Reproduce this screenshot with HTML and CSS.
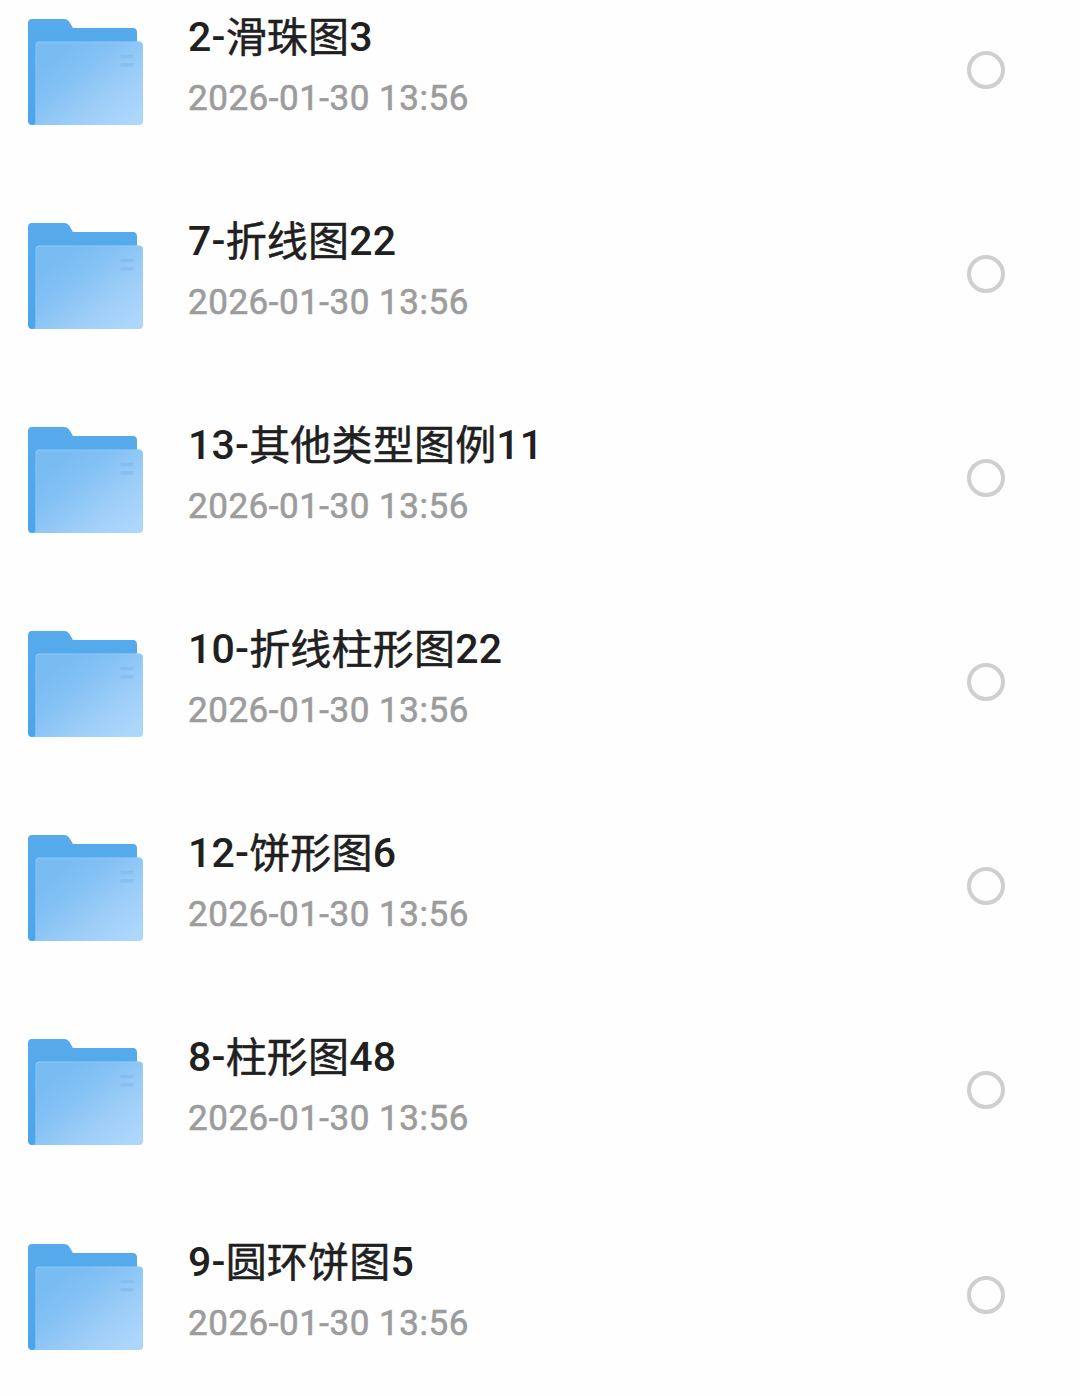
FILE: index.html
```html
<!DOCTYPE html>
<html lang="zh-CN">
<head>
<meta charset="utf-8">
<title>文件列表</title>
<link rel="stylesheet" href="styles.css">
</head>
<body>
<svg class="defs" width="0" height="0" aria-hidden="true">
  <defs>
    <linearGradient id="back" x1="0" y1="0" x2="0" y2="1">
      <stop offset="0" stop-color="#57abec"/>
      <stop offset="1" stop-color="#4ba5ec"/>
    </linearGradient>
    <linearGradient id="front" gradientUnits="userSpaceOnUse" x1="26" y1="35" x2="88" y2="112">
      <stop offset="0" stop-color="#78bcf2"/>
      <stop offset="0.3" stop-color="#84c1f4"/>
      <stop offset="0.65" stop-color="#9bcdf8"/>
      <stop offset="1" stop-color="#add6fb"/>
    </linearGradient>
    <symbol id="folder" viewBox="0 0 116 107">
      <path fill="url(#back)" d="M0 4Q0 0 4 0H36Q39.500 0 41.500 3L45 9H105Q109 9 109 13.500V106H4Q0 106 0 102Z"/>
      <path fill="url(#front)" d="M7.500 26Q7.500 22.500 11 22.500H111Q115 22.500 115 26.500V102Q115 106 111 106H5Q7.500 105 7.500 102Z"/>
      <path fill="none" stroke="#9dcff8" stroke-width="1" opacity=".5" d="M8 102V26Q8 23 11 23H111Q114.500 23 114.500 26.500V102"/>
      <path fill="none" stroke="#7ab5ea" stroke-width="3.500" stroke-linecap="round" opacity=".5" d="M94 37.500H104M94 45.700H104"/>
    </symbol>
  </defs>
</svg>
<ul class="list">
  <li class="row"><svg class="icon"><use href="#folder"/></svg><div class="info"><div class="name">2-<span class="han">滑珠图</span>3</div><div class="date">2026-01-30 13:56</div></div><span class="check"></span></li>
  <li class="row"><svg class="icon"><use href="#folder"/></svg><div class="info"><div class="name">7-<span class="han">折线图</span>22</div><div class="date">2026-01-30 13:56</div></div><span class="check"></span></li>
  <li class="row"><svg class="icon"><use href="#folder"/></svg><div class="info"><div class="name">13-<span class="han">其他类型图例</span>11</div><div class="date">2026-01-30 13:56</div></div><span class="check"></span></li>
  <li class="row"><svg class="icon"><use href="#folder"/></svg><div class="info"><div class="name">10-<span class="han">折线柱形图</span>22</div><div class="date">2026-01-30 13:56</div></div><span class="check"></span></li>
  <li class="row"><svg class="icon"><use href="#folder"/></svg><div class="info"><div class="name">12-<span class="han">饼形图</span>6</div><div class="date">2026-01-30 13:56</div></div><span class="check"></span></li>
  <li class="row"><svg class="icon"><use href="#folder"/></svg><div class="info"><div class="name">8-<span class="han">柱形图</span>48</div><div class="date">2026-01-30 13:56</div></div><span class="check"></span></li>
  <li class="row"><svg class="icon"><use href="#folder"/></svg><div class="info"><div class="name">9-<span class="han">圆环饼图</span>5</div><div class="date">2026-01-30 13:56</div></div><span class="check"></span></li>
</ul>
</body>
</html>
```
FILE: styles.css
```css
body {
  margin: 0;
  height: 1396px;
  overflow: hidden;
  background: #fefefe;
  font-family: Roboto, "Noto Sans CJK SC", sans-serif;
}
.defs { display: block; }
.list {
  margin: 0;
  padding: 0;
  list-style: none;
}
.row {
  display: flex;
  align-items: flex-start;
  height: 204.100px;
  padding: 0 75px 0 28px;
  box-sizing: border-box;
}
.icon {
  flex: none;
  width: 116px;
  height: 107px;
  margin-top: 19px;
}
.info {
  flex: 1;
  margin: 7px 0 0 44px;
  white-space: nowrap;
}
.name {
  height: 60px;
  line-height: 60px;
  font-size: 41px;
  font-weight: 500;
  letter-spacing: 0.200px;
  color: #202020;
}
.han {
  line-height: 1;
  vertical-align: -1px;
  font-weight: 400;
  -webkit-text-stroke: 0.500px #202020;
}
.date {
  height: 50px;
  margin-top: 7px;
  line-height: 50px;
  font-size: 35px;
  letter-spacing: 0.520px;
  color: #9c9c9c;
  -webkit-text-stroke: 0.600px #9c9c9c;
}
.check {
  flex: none;
  width: 38px;
  height: 38px;
  margin-top: 51px;
  box-sizing: border-box;
  border: 4px solid #cfcfcf;
  border-radius: 50%;
}
```
